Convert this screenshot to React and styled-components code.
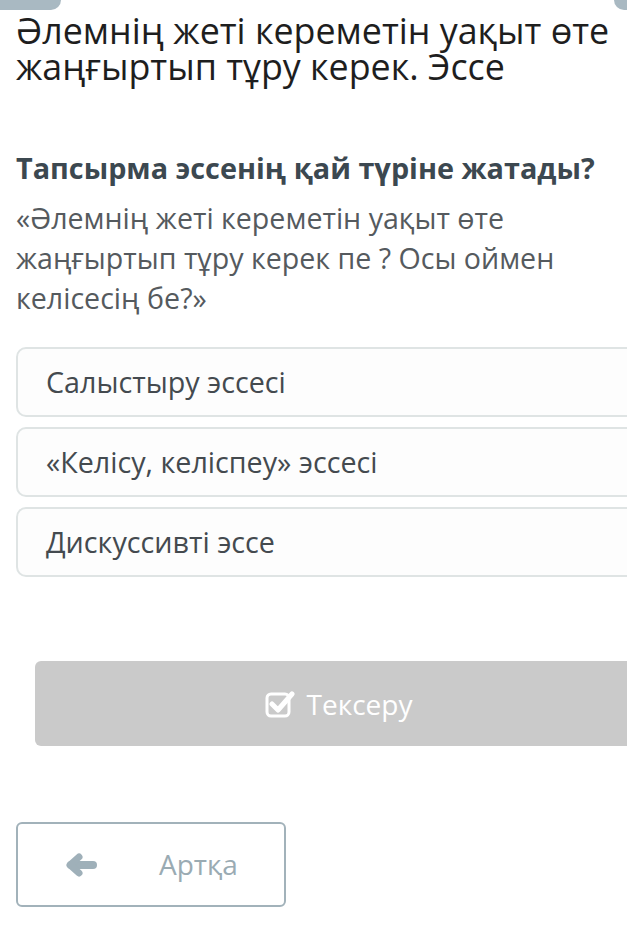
import React from "react";
import styled, { createGlobalStyle } from "styled-components";

const GlobalStyle = createGlobalStyle`
  html, body {
    margin: 0;
    padding: 0;
    background: #ffffff;
    overflow: hidden;
  }
  body {
    font-family: "Open Sans", "Noto Sans", sans-serif;
  }
`;

const Page = styled.div`
  width: 660px;
  min-height: 945px;
`;

const TopBar = styled.div`
  display: flex;
  justify-content: space-between;
  width: 627px;
  height: 10px;
`;

const TopTab = styled.div`
  height: 10px;
  width: ${(p) => p.w}px;
  background: #a9b9c2;
  border-radius: ${(p) => (p.right ? "0 0 0 10px" : "0 0 10px 0")};
`;

const Title = styled.h1`
  margin: 2px 0 0 16px;
  font-size: 35.8px;
  font-weight: 400;
  line-height: 36px;
  color: #1e1e1e;
  width: 611px;
`;

const Question = styled.h2`
  margin: 66px 0 0 16px;
  font-size: 28.8px;
  font-weight: 700;
  line-height: 36px;
  color: #3c4850;
  white-space: nowrap;
`;

const Quote = styled.p`
  margin: 12px 0 0 16px;
  width: 560px;
  font-size: 28.6px;
  line-height: 40px;
  color: #555a5e;
`;

const Options = styled.div`
  display: flex;
  flex-direction: column;
  gap: 10px;
  margin: 29px 0 0 16px;
`;

const Option = styled.div`
  height: 70px;
  box-sizing: border-box;
  border: 2px solid #dfe4e4;
  border-radius: 10px;
  background: #fdfdfd;
  display: flex;
  align-items: center;
  padding: 0 0 2px 28px;
  font-size: 28.7px;
  color: #444a4f;
`;

const CheckButton = styled.div`
  margin: 84px 0 0 35px;
  height: 85px;
  background: #cacaca;
  border-radius: 6px;
  display: flex;
  align-items: center;
  justify-content: center;
  gap: 12px;
  padding-right: 18px;
  font-size: 28px;
  color: #ffffff;
`;

const BackButton = styled.div`
  margin: 76px 0 0 16px;
  width: 270px;
  height: 85px;
  box-sizing: border-box;
  border: 2px solid #a2b2ba;
  border-radius: 6px;
  display: flex;
  align-items: center;
  padding-left: 47px;
  font-size: 28px;
  color: #9aabb3;
`;

const BackLabel = styled.span`
  margin-left: 62px;
  padding-bottom: 2px;
`;

const CheckIcon = () => (
  <svg width="30" height="28" viewBox="0 0 30 28">
    <rect x="2" y="4" width="22" height="22" rx="4" fill="none" stroke="#fff" strokeWidth="3" />
    <path d="M7 14 L13 20 L27 4" fill="none" stroke="#fff" strokeWidth="5" strokeLinecap="round" strokeLinejoin="round" />
  </svg>
);

const ArrowIcon = () => (
  <svg width="32" height="26" viewBox="0 0 32 26">
    <g fill="none" stroke="#9fb0b9" strokeLinecap="round" strokeLinejoin="round">
      <path d="M6 13 L28 13" strokeWidth="8" />
      <path d="M14 5 L5 13 L14 21" strokeWidth="7" />
    </g>
  </svg>
);

const options = [
  "Салыстыру эссесі",
  "«Келісу, келіспеу» эссесі",
  "Дискуссивті эссе",
];

export default function App() {
  return (
    <Page>
      <GlobalStyle />
      <TopBar>
        <TopTab w={61} />
        <TopTab w={13} right />
      </TopBar>
      <Title>Әлемнің жеті кереметін уақыт өте жаңғыртып тұру керек. Эссе</Title>
      <Question>Тапсырма эссенің қай түріне жатады?</Question>
      <Quote>«Әлемнің жеті кереметін уақыт өте жаңғыртып тұру керек пе ? Осы оймен келісесің бе?»</Quote>
      <Options>
        {options.map((o) => (
          <Option key={o}>{o}</Option>
        ))}
      </Options>
      <CheckButton>
        <CheckIcon />
        <span>Тексеру</span>
      </CheckButton>
      <BackButton>
        <ArrowIcon />
        <BackLabel>Артқа</BackLabel>
      </BackButton>
    </Page>
  );
}
